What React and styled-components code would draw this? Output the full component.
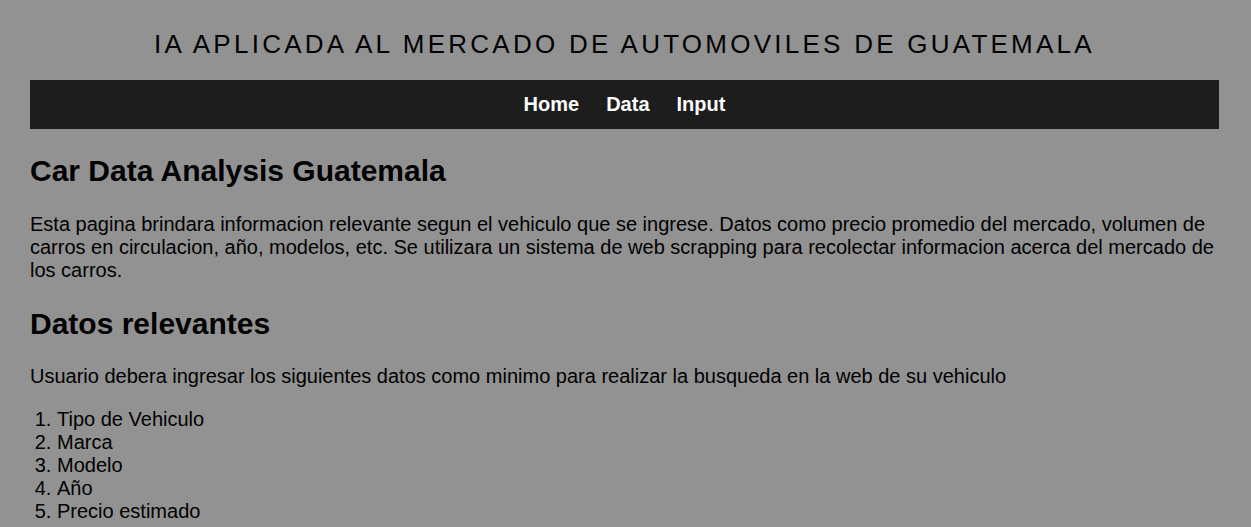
import styled, { createGlobalStyle } from "styled-components";

const GlobalStyle = createGlobalStyle`
  body {
    margin: 0;
    background: #929292;
    font-family: "Liberation Sans", Arial, sans-serif;
    color: #000;
  }
`;

const Page = styled.div`
  padding: 0 32px 0 30px;
`;

const Title = styled.h1`
  margin: 0;
  padding: 28px 0 20px;
  text-align: center;
  font-size: 26px;
  font-weight: normal;
  letter-spacing: 3.25px;
  line-height: 32px;
`;

const NavBar = styled.nav`
  display: flex;
  justify-content: center;
  align-items: center;
  gap: 27px;
  height: 49px;
  background: #1d1d1d;

  a {
    color: #fff;
    font-weight: bold;
    font-size: 20px;
    text-decoration: none;
  }
`;

const Heading = styled.h2`
  font-size: 30px;
  line-height: 34px;
  margin: 25px 0 24.5px;
`;

const Text = styled.p`
  font-size: 20px;
  line-height: 23px;
  margin: 0 0 20px;
`;

const List = styled.ol`
  margin: 0;
  padding-left: 27px;
  font-size: 20px;
  line-height: 23px;
`;

const App = () => {
  const fields = ["Tipo de Vehiculo", "Marca", "Modelo", "Año", "Precio estimado"];

  return (
    <>
      <GlobalStyle />
      <Page>
        <Title>IA APLICADA AL MERCADO DE AUTOMOVILES DE GUATEMALA</Title>
        <NavBar>
          <a href="#">Home</a>
          <a href="#">Data</a>
          <a href="#">Input</a>
        </NavBar>
        <Heading>Car Data Analysis Guatemala</Heading>
        <Text>
          Esta pagina brindara informacion relevante segun el vehiculo que se
          ingrese. Datos como precio promedio del mercado, volumen de carros en
          circulacion, año, modelos, etc. Se utilizara un sistema de web
          scrapping para recolectar informacion acerca del mercado de los
          carros.
        </Text>
        <Heading>Datos relevantes</Heading>
        <Text>
          Usuario debera ingresar los siguientes datos como minimo para realizar
          la busqueda en la web de su vehiculo
        </Text>
        <List>
          {fields.map((f) => (
            <li key={f}>{f}</li>
          ))}
        </List>
      </Page>
    </>
  );
};

export default App;
